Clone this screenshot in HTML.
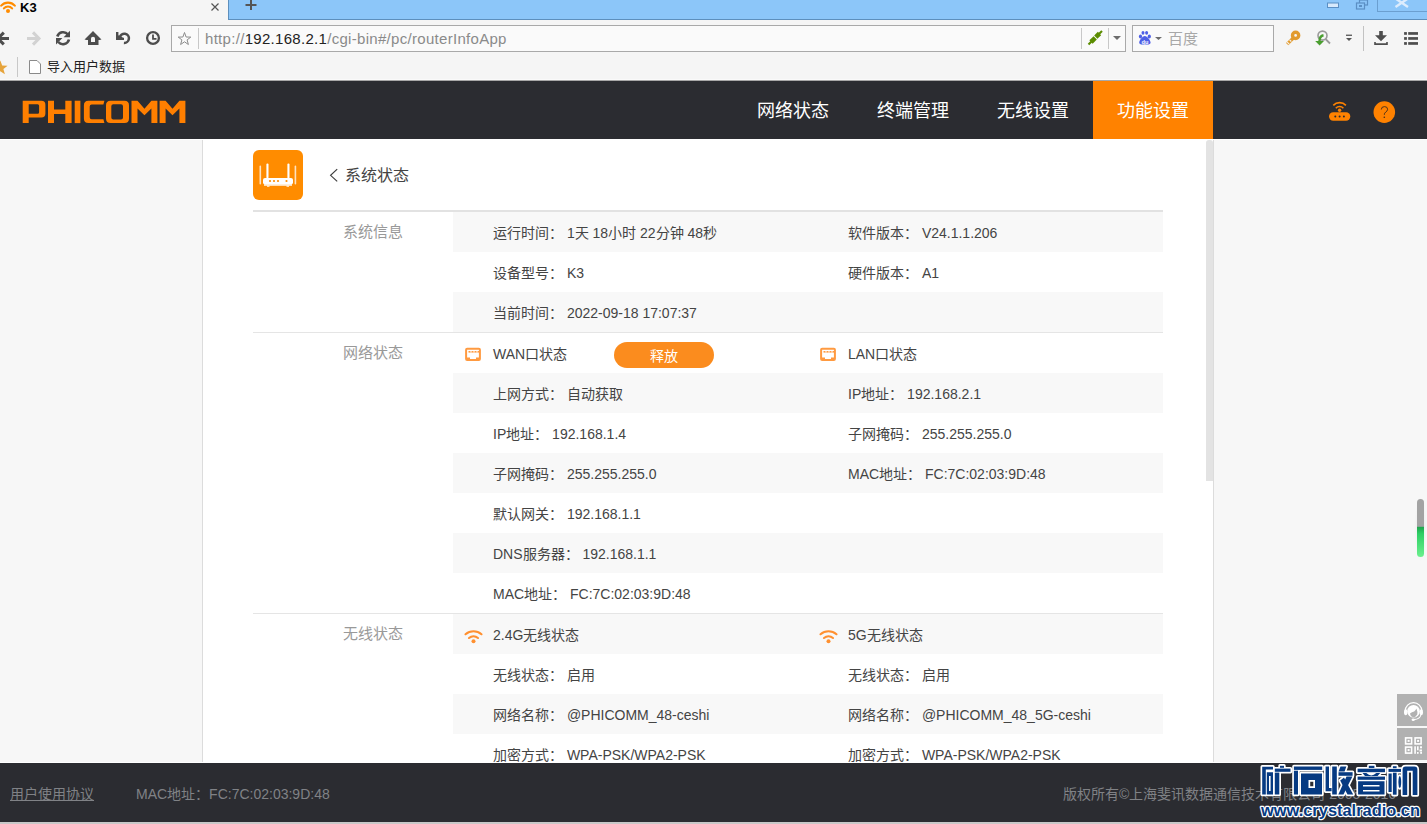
<!DOCTYPE html>
<html lang="zh-CN">
<head>
<meta charset="utf-8">
<style>
*{box-sizing:border-box;margin:0;padding:0}
html,body{width:1427px;height:824px;overflow:hidden;background:#f7f7f7;font-family:"Liberation Sans",sans-serif;color:#333}
.a{position:absolute}
#chrome{position:absolute;left:0;top:0;width:1427px;height:81px;background:#f5f5f5}
#tabstrip{position:absolute;left:228px;top:0;width:1199px;height:20px;background:#8cc6f9;border-left:1px solid #5d8fbd;border-bottom:1px solid #5d8fbd}
#addr{position:absolute;left:171px;top:25px;width:955px;height:27px;background:#fafafa;border:1px solid #a9a9a9}
#search{position:absolute;left:1132px;top:25px;width:142px;height:27px;background:#fafafa;border:1px solid #a9a9a9}
#hdr{position:absolute;left:0;top:81px;width:1427px;height:58px;background:#2b2c31}
.nav{position:absolute;top:0;height:58px;width:120px;line-height:61px;text-align:center;color:#fff;font-size:18px}
#panel{position:absolute;left:202px;top:140px;width:1012px;height:623px;background:#fff;border-left:1px solid #dcdcdc;border-right:1px solid #dcdcdc}
.row{position:absolute;left:453px;width:710px;height:40px}
.g{background:#f8f8f8}
.t{position:absolute;font-size:14px;line-height:40px;white-space:nowrap;color:#444;margin-top:1px}
.lbl{position:absolute;font-size:15px;color:#999;white-space:nowrap}
.div{position:absolute;left:253px;width:910px;height:1px;background:#e5e5e5}
#footer{position:absolute;left:0;top:763px;width:1427px;height:59px;background:#2b2c31}
</style>
</head>
<body>
<div id="chrome">
  <div id="tabstrip"></div>
  <div class="a" style="left:20px;top:0;font-size:13px;font-weight:bold;line-height:16px;color:#000">K3</div>
  <div id="addr"></div>
  <!--CHROMESVG-->
  <div class="a" style="left:205px;top:30px;font-size:15px;letter-spacing:0.3px;line-height:18px;color:#8a8a8a">http://<span style="color:#222">192.168.2.1</span>/cgi-bin#/pc/routerInfoApp</div>
  <div id="search"></div>
  <div class="a" style="left:1168px;top:30px;font-size:15px;line-height:18px;color:#a8a8a8">百度</div>
  <div class="a" style="left:47px;top:58px;font-size:13px;line-height:18px;color:#222">导入用户数据</div>

  <svg class="a" style="left:0;top:0" width="1427" height="81" viewBox="0 0 1427 81">
    <!-- tab favicon wifi -->
    <g fill="none" stroke="#ff8c00" stroke-width="2.1" stroke-linecap="round">
      <path d="M1.2,5.6 A9.2,9.2 0 0 1 14.8,5.6"/>
      <path d="M3.9,8.4 A5.3,5.3 0 0 1 12.1,8.4"/>
    </g>
    <circle cx="8" cy="11.1" r="2" fill="#ff8c00"/>
    <!-- tab close -->
    <path d="M211.5,3.5 L218.5,10.5 M218.5,3.5 L211.5,10.5" stroke="#555" stroke-width="1.2"/>
    <!-- window controls -->
    <rect x="1327.5" y="3" width="11" height="4.5" fill="#d6e9fc" stroke="#5b8fc4" stroke-width="1"/>
    <rect x="1359.5" y="0" width="8" height="5" fill="none" stroke="#5b8fc4" stroke-width="1.2"/>
    <rect x="1356.5" y="3" width="8" height="6" fill="#8cc6f9" stroke="#5b8fc4" stroke-width="1.2"/>
    <rect x="1359" y="5" width="3" height="2" fill="#5b8fc4"/>
    <rect x="1377.5" y="-1" width="50" height="12.5" fill="none" stroke="#6b9fd0" stroke-width="1"/>
    <path d="M1395.5,-1.5 L1408,7 M1408,-1.5 L1395.5,7" stroke="#dcecfd" stroke-width="2.4" fill="none"/>
    <!-- new tab plus -->
    <path d="M245.5,5 H256.5 M251,0 V10" stroke="#555" stroke-width="2"/>
    <!-- back -->
    <g fill="none" stroke="#4d4d4d" stroke-width="3">
      <path d="M9,38.5 H0"/>
      <path d="M3.8,32.6 L-2,38.5 L3.8,44.4"/>
    </g>
    <!-- forward -->
    <g fill="none" stroke="#d2d2d2" stroke-width="3">
      <path d="M27,38.5 H38"/>
      <path d="M33,32.4 L39,38.5 L33,44.6"/>
    </g>
    <!-- refresh -->
    <g fill="none" stroke="#4d4d4d" stroke-width="2.6">
      <path d="M57.3,36.5 A6.2,6.2 0 0 1 68,34.5"/>
      <path d="M69,39.5 A6.2,6.2 0 0 1 58.3,42"/>
    </g>
    <path d="M70,30.8 V37.2 H63.6 Z" fill="#4d4d4d"/>
    <path d="M56,44.5 V38 H62.4 Z" fill="#4d4d4d"/>
    <!-- home -->
    <path d="M93,31 L101.5,39.5 L99.5,40 L98.5,40 V45 H88 V40 H86.5 L84.5,39.5 Z" fill="#4d4d4d"/>
    <path d="M91,42 V38.3 Q91,37 93,36.8 Q95,37 95,38.3 V42 Z" fill="#f5f5f5"/>
    <!-- undo -->
    <path d="M116,32 H118.4 V35.2 L123.2,37.7 H124 V40.1 H116 Z" fill="#4d4d4d"/>
    <path d="M119.8,37.4 A4.6,4.6 0 1 1 123.9,42.9" fill="none" stroke="#4d4d4d" stroke-width="2.5"/>
    <!-- history clock -->
    <circle cx="153" cy="38" r="5.9" fill="none" stroke="#4d4d4d" stroke-width="2.3"/>
    <path d="M153,34.5 V38.8 H156.5" fill="none" stroke="#4d4d4d" stroke-width="1.8"/>
    <!-- addr star -->
    <path d="M184.5,32.5 L186.1,37 L190.8,37.1 L187.1,39.9 L188.4,44.5 L184.5,41.8 L180.6,44.5 L181.9,39.9 L178.2,37.1 L182.9,37 Z" fill="none" stroke="#8c8c8c" stroke-width="1"/>
    <rect x="198" y="28" width="1" height="21" fill="#c8c8c8"/>
    <rect x="1081" y="28" width="1" height="21" fill="#c8c8c8"/>
    <rect x="1108" y="28" width="1" height="21" fill="#c8c8c8"/>
    <!-- plug -->
    <g stroke="#5b8c00" stroke-linecap="butt" fill="none">
      <path d="M1088.5,44.5 L1092.5,40.5" stroke-width="2.2"/>
      <path d="M1091,42 L1095.2,37.8" stroke-width="4.6"/>
      <path d="M1095.8,37.2 L1099.5,33.5" stroke-width="4.6"/>
      <path d="M1098.5,34.5 L1102,31" stroke-width="2.2"/>
    </g>
    <path d="M1113,36 H1121 L1117,40 Z" fill="#6d6d6d"/>
    <!-- baidu paw -->
    <g fill="#4e5fe6">
      <ellipse cx="1140.5" cy="36.5" rx="1.6" ry="2"/>
      <ellipse cx="1143" cy="32.8" rx="1.5" ry="1.9"/>
      <ellipse cx="1146.6" cy="32.8" rx="1.5" ry="1.9"/>
      <ellipse cx="1149.3" cy="36.5" rx="1.6" ry="2"/>
      <path d="M1144.8,36 C1142.5,36 1139.2,40.5 1139.2,42.5 C1139.2,44.7 1142,44.8 1144.8,44.3 C1147.6,44.8 1150.6,44.7 1150.6,42.5 C1150.6,40.5 1147.2,36 1144.8,36 Z"/>
    </g>
    <text x="1144.9" y="43.6" font-family="Liberation Sans" font-size="5.6" font-weight="bold" fill="#fff" text-anchor="middle">du</text>
    <path d="M1155,37 H1162 L1158.5,40 Z" fill="#6d6d6d"/>
    <!-- key -->
    <circle cx="1295.6" cy="35.4" r="3.1" fill="none" stroke="#e29b2e" stroke-width="3.4"/>
    <path d="M1293.3,38 L1287.2,44.1" stroke="#e29b2e" stroke-width="3.2"/>
    <path d="M1287.2,42.2 L1289.2,44.2 M1289.6,39.8 L1291.3,41.5" stroke="#f5f5f5" stroke-width="1.1"/>
    <!-- magnifier -->
    <circle cx="1322.5" cy="35.6" r="4.5" fill="none" stroke="#9a9a9a" stroke-width="1.6"/>
    <path d="M1325.5,39 L1330,43.5" stroke="#9a9a9a" stroke-width="1.8"/>
    <path d="M1323.5,35.2 Q1319.5,36 1319.5,41" fill="none" stroke="#4a9e30" stroke-width="2.4"/>
    <path d="M1315.2,41 H1324 L1319.6,45.6 Z" fill="#4a9e30"/>
    <!-- overflow -->
    <rect x="1346" y="34.6" width="6" height="1.3" fill="#555"/>
    <path d="M1346,38 H1352 L1349,41 Z" fill="#555"/>
    <rect x="1363" y="26" width="1" height="25" fill="#c2c2c2"/>
    <!-- download -->
    <rect x="1379.2" y="31" width="3.6" height="5" fill="#4d4d4d"/>
    <path d="M1375,35.2 H1387 L1381,41.3 Z" fill="#4d4d4d"/>
    <path d="M1374.2,42 H1375.8 V43.3 H1386.2 V42 H1387.8 V45 H1374.2 Z" fill="#4d4d4d"/>
    <!-- list -->
    <g fill="#4d4d4d">
      <rect x="1404.1" y="32.1" width="2.8" height="2.7"/>
      <rect x="1408.2" y="32.1" width="9.8" height="2.7"/>
      <rect x="1404.1" y="37.1" width="2.8" height="2.7"/>
      <rect x="1408.2" y="37.1" width="9.8" height="2.7"/>
      <rect x="1404.1" y="42.1" width="2.8" height="2.7"/>
      <rect x="1408.2" y="42.1" width="9.8" height="2.7"/>
    </g>
    <!-- bookmarks star -->
    <path d="M0.3,60.6 L2.2,65.6 L7.6,65.8 L3.4,69.1 L4.9,74.2 L0.3,71.2 L-4.3,74.2 L-2.8,69.1 L-7,65.8 L-1.6,65.6 Z" fill="#e6a43c"/>
    <rect x="17" y="57" width="1" height="20" fill="#c8c8c8"/>
    <!-- doc icon -->
    <path d="M29.5,60.5 H37 L40.5,64 V73.5 H29.5 Z" fill="#fff" stroke="#8a8a8a" stroke-width="1"/>
    <rect x="0" y="79" width="1427" height="1" fill="#fafafa"/>
    <rect x="0" y="80" width="1427" height="1" fill="#a8a8a8"/>
  </svg>
</div>
<div id="hdr">
  <div class="nav" style="left:733px">网络状态</div>
  <div class="nav" style="left:853px">终端管理</div>
  <div class="nav" style="left:973px">无线设置</div>
  <div class="nav" style="left:1093px;background:#ff8200">功能设置</div>
  <svg class="a" style="left:0;top:0" width="1427" height="58" viewBox="0 81 1427 58">
    <g fill="#ff7f00">
      <path d="M22.7,123.1 V100.7 H41.4 Q45.4,100.7 45.4,104.7 V113.4 Q45.4,117.4 41.4,117.4 H28.7 V123.1 Z M28.7,104.2 V113.7 H37.6 Q39.1,113.7 39.1,112.2 V105.7 Q39.1,104.2 37.6,104.2 Z" fill-rule="evenodd"/>
      <path d="M48,100.7 H54 V109.6 H65.3 V100.7 H71.6 V123.1 H65.3 V114 H54 V123.1 H48 Z"/>
      <rect x="74.7" y="100.7" width="5.7" height="22.4"/>
      <path d="M104.4,100.7 L103.4,104.5 H91.7 Q89.7,104.5 89.7,106.5 V117.3 Q89.7,119.3 91.7,119.3 H103.4 L104.4,123.1 H88.4 Q83.9,123.1 83.9,118.6 V105.2 Q83.9,100.7 88.4,100.7 Z"/>
      <path d="M110.5,100.7 H124.5 Q129,100.7 129,105.2 V118.6 Q129,123.1 124.5,123.1 H110.5 Q106,123.1 106,118.6 V105.2 Q106,100.7 110.5,100.7 Z M113.3,104.2 Q111.3,104.2 111.3,106.2 V117.6 Q111.3,119.6 113.3,119.6 H121 Q123,119.6 123,117.6 V106.2 Q123,104.2 121,104.2 Z" fill-rule="evenodd"/>
      <path d="M131.5,123.1 V100.7 H137.5 L144.45,108.8 L151.4,100.7 H157.4 V123.1 H151.4 V108.6 L144.45,115.2 L137.5,108.6 V123.1 Z"/>
      <path d="M159.6,123.1 V100.7 H165.6 L172.5,108.8 L179.4,100.7 H185.4 V123.1 H179.4 V108.6 L172.5,115.2 L165.6,108.6 V123.1 Z"/>
    </g>
    <!-- router icon -->
    <g fill="#ff8200">
      <rect x="1329" y="112.3" width="21.3" height="8.4" rx="4.2"/>
      <circle cx="1339.6" cy="110.3" r="1.7"/>
    </g>
    <g fill="#2b2c31">
      <circle cx="1335.3" cy="116.5" r="1"/>
      <circle cx="1339.6" cy="116.5" r="1"/>
      <circle cx="1343.9" cy="116.5" r="1"/>
    </g>
    <g fill="none" stroke="#ff8200" stroke-width="1.6">
      <path d="M1335.8,108.2 A5.2,5.2 0 0 1 1343.4,108.2"/>
      <path d="M1333.3,105.4 A8.6,8.6 0 0 1 1345.9,105.4"/>
    </g>
    <!-- help circle -->
    <circle cx="1384.3" cy="112.1" r="10.8" fill="#ff8200"/>
    <path d="M1381.3,109.5 Q1381.3,106.6 1384.5,106.6 Q1387.6,106.6 1387.6,109.3 Q1387.6,110.9 1385.7,112.1 Q1384.3,113 1384.3,114.8" fill="none" stroke="#3a2a20" stroke-width="0.9"/>
    <circle cx="1384.3" cy="117.3" r="0.8" fill="#3a2a20"/>
  </svg>
</div>
<div class="a" style="left:0;top:139px;width:1427px;height:1px;background:#fff"></div>
<div id="panel"></div>
<div class="a" style="left:1206px;top:140px;width:7px;height:341px;background:#e3e3e3;border-radius:3px 3px 0 0"></div>

<div class="a" style="left:253px;top:150px;width:50px;height:50px;background:#ff8c00;border-radius:6px"></div>
<div class="a" style="left:345px;top:165px;font-size:16px;line-height:22px;color:#444">系统状态</div>



<div class="div" style="top:210px;height:2px;background:#e2e2e2"></div>
<div class="lbl" style="left:343px;top:220px">系统信息</div>
<div class="row g" style="top:212px"></div>
<div class="row" style="top:252px"></div>
<div class="row g" style="top:292px"></div>
<div class="t" style="left:493px;top:212px">运行时间： 1天 18小时 22分钟 48秒</div>
<div class="t" style="left:848px;top:212px">软件版本： V24.1.1.206</div>
<div class="t" style="left:493px;top:252px">设备型号： K3</div>
<div class="t" style="left:848px;top:252px">硬件版本： A1</div>
<div class="t" style="left:493px;top:292px">当前时间： 2022-09-18 17:07:37</div>

<div class="div" style="top:332px"></div>
<div class="lbl" style="left:343px;top:341px">网络状态</div>
<div class="row g" style="top:373px"></div>
<div class="row g" style="top:453px"></div>
<div class="row g" style="top:533px"></div>
<div class="t" style="left:493px;top:333px">WAN口状态</div>
<div class="t" style="left:848px;top:333px">LAN口状态</div>
<div class="a" style="left:614px;top:342px;width:100px;height:26px;border-radius:13px;background:#fb8c1e;color:#fff;font-size:14px;line-height:29px;text-align:center">释放</div>
<div class="t" style="left:493px;top:373px">上网方式： 自动获取</div>
<div class="t" style="left:848px;top:373px">IP地址： 192.168.2.1</div>
<div class="t" style="left:493px;top:413px">IP地址： 192.168.1.4</div>
<div class="t" style="left:848px;top:413px">子网掩码： 255.255.255.0</div>
<div class="t" style="left:493px;top:453px">子网掩码： 255.255.255.0</div>
<div class="t" style="left:848px;top:453px">MAC地址： FC:7C:02:03:9D:48</div>
<div class="t" style="left:493px;top:493px">默认网关： 192.168.1.1</div>
<div class="t" style="left:493px;top:533px">DNS服务器： 192.168.1.1</div>
<div class="t" style="left:493px;top:573px">MAC地址： FC:7C:02:03:9D:48</div>

<div class="div" style="top:613px"></div>
<div class="lbl" style="left:343px;top:622px">无线状态</div>
<div class="row g" style="top:614px"></div>
<div class="row g" style="top:694px"></div>
<div class="t" style="left:493px;top:614px">2.4G无线状态</div>
<div class="t" style="left:848px;top:614px">5G无线状态</div>
<div class="t" style="left:493px;top:654px">无线状态： 启用</div>
<div class="t" style="left:848px;top:654px">无线状态： 启用</div>
<div class="t" style="left:493px;top:694px">网络名称： @PHICOMM_48-ceshi</div>
<div class="t" style="left:848px;top:694px">网络名称： @PHICOMM_48_5G-ceshi</div>
<div class="t" style="left:493px;top:734px">加密方式： WPA-PSK/WPA2-PSK</div>
<div class="t" style="left:848px;top:734px">加密方式： WPA-PSK/WPA2-PSK</div>

<svg class="a" style="left:0;top:140px" width="1427" height="623" viewBox="0 140 1427 623">
  <!-- router box icon -->
  <g fill="#fff">
    <rect x="266.4" y="163.6" width="2.1" height="15" rx="1"/>
    <rect x="287.4" y="163.6" width="2.1" height="15" rx="1"/>
    <rect x="259.5" y="165.6" width="1.6" height="19" rx="0.8" opacity="0.75"/>
    <rect x="294.6" y="165.6" width="1.6" height="19" rx="0.8" opacity="0.75"/>
    <rect x="263" y="178" width="30" height="6.5" rx="2"/>
    <rect x="264" y="184" width="28" height="2" opacity="0.7"/>
    <rect x="267" y="185.5" width="2.5" height="1.5" opacity="0.7"/>
    <rect x="286.5" y="185.5" width="2.5" height="1.5" opacity="0.7"/>
  </g>
  <g fill="#ff8c00">
    <circle cx="270" cy="181" r="1.1"/>
    <circle cx="274" cy="181" r="1.1"/>
    <circle cx="278" cy="181" r="1.1"/>
    <circle cx="286.5" cy="181" r="1.1"/>
  </g>
  <!-- back chevron -->
  <path d="M337.2,169.2 L330.6,175.3 L337.2,181.4" fill="none" stroke="#3c3c3c" stroke-width="1.15"/>
  <!-- WAN / LAN icons -->
  <g fill="none" stroke="#ff9a40" stroke-width="2">
    <rect x="466.1" y="348.8" width="13.8" height="11.2" rx="1"/>
    <rect x="821.1" y="348.8" width="13.8" height="11.2" rx="1"/>
  </g>
  <g fill="#ff9a40">
    <rect x="468.5" y="351" width="11" height="1.6"/>
    <rect x="823.5" y="351" width="11" height="1.6"/>
    <rect x="467" y="357.5" width="3" height="2"/>
    <rect x="476" y="357.5" width="3" height="2"/>
    <rect x="822" y="357.5" width="3" height="2"/>
    <rect x="831" y="357.5" width="3" height="2"/>
  </g>
  <g fill="#fff">
    <rect x="470.5" y="351" width="1" height="1.6"/><rect x="473.5" y="351" width="1" height="1.6"/><rect x="476.5" y="351" width="1" height="1.6"/>
    <rect x="825.5" y="351" width="1" height="1.6"/><rect x="828.5" y="351" width="1" height="1.6"/><rect x="831.5" y="351" width="1" height="1.6"/>
  </g>
  <!-- wifi icons -->
  <g fill="none" stroke="#ff9030" stroke-width="2.1" stroke-linecap="round">
    <path d="M465.5,634.2 A12.3,12.3 0 0 1 481.5,634.2"/>
    <path d="M469,638 A7.2,7.2 0 0 1 478,638"/>
    <path d="M820.5,634.2 A12.3,12.3 0 0 1 836.5,634.2"/>
    <path d="M824,638 A7.2,7.2 0 0 1 833,638"/>
  </g>
  <circle cx="473.5" cy="641.2" r="2" fill="#ff9030"/>
  <circle cx="828.5" cy="641.2" r="2" fill="#ff9030"/>
</svg>

<!-- floating side buttons -->
<div class="a" style="left:1397px;top:694px;width:30px;height:32px;background:#b1b1b1"></div>
<div class="a" style="left:1397px;top:728px;width:30px;height:32px;background:#b1b1b1"></div>
<svg class="a" style="left:1397px;top:694px" width="30" height="66" viewBox="1397 694 30 66">
  <path d="M1405.2,711 A8.3,8.3 0 0 1 1421.8,711" fill="none" stroke="#fff" stroke-width="1.3"/>
  <circle cx="1413.5" cy="711.3" r="6.3" fill="#fff"/>
  <path d="M1410,713.6 Q1411.8,711.8 1414.2,711.4 Q1415.8,710 1416.4,708.6 Q1417.8,711.8 1417.3,714.6 Q1415.6,717.4 1413.3,717.3 Q1410.6,717 1410,713.6 Z" fill="#b1b1b1"/>
  <ellipse cx="1405.7" cy="712.3" rx="1.7" ry="3" fill="#fff"/>
  <ellipse cx="1421.3" cy="712.3" rx="1.7" ry="3" fill="#fff"/>
  <path d="M1421,714.5 Q1420,719.3 1414,719.6" fill="none" stroke="#fff" stroke-width="1.1"/>
  <ellipse cx="1413.2" cy="719.8" rx="1.6" ry="1.2" fill="#fff"/>
  <g fill="none" stroke="#fff" stroke-width="1.6">
    <rect x="1405.6" y="737.9" width="6" height="6"/>
    <rect x="1415.1" y="737.9" width="6" height="6"/>
    <rect x="1405.6" y="747.1" width="6" height="6"/>
  </g>
  <g fill="#fff">
    <rect x="1407.6" y="739.9" width="2" height="2"/>
    <rect x="1417.1" y="739.9" width="2" height="2"/>
    <rect x="1407.6" y="749.1" width="2" height="2"/>
    <rect x="1414.3" y="746.3" width="1.6" height="7.5"/>
    <rect x="1417" y="746.3" width="1.6" height="4"/>
    <rect x="1420" y="746.3" width="2" height="2"/>
    <rect x="1419.5" y="749.5" width="2.5" height="2"/>
    <rect x="1417" y="752" width="1.6" height="1.8"/>
    <rect x="1420.2" y="752" width="1.8" height="1.8"/>
  </g>
</svg>
<!-- scroll indicator -->
<div class="a" style="left:1414px;top:496px;width:13px;height:66px;background:radial-gradient(ellipse at center,rgba(0,0,0,0.06),rgba(0,0,0,0) 70%)"></div>
<div class="a" style="left:1417px;top:499px;width:7px;height:58px;border-radius:3.5px;background:linear-gradient(#a3a3a3 0,#a3a3a3 47%,#1fa84f 49%,#2ecf65 60%,#6cf08e 100%)"></div>
<div class="a" style="left:0;top:762px;width:1427px;height:1px;background:#fff"></div>
<div id="footer">
  <div class="a" style="left:10px;top:22px;font-size:14px;line-height:18px;color:#808286;text-decoration:underline">用户使用协议</div>
  <div class="a" style="left:136px;top:22px;font-size:14px;line-height:18px;color:#808286">MAC地址：FC:7C:02:03:9D:48</div>
  <div class="a" style="left:1063px;top:22px;font-size:14px;line-height:18px;color:#808286">版权所有©上海斐讯数据通信技术有限公司 2005-2016</div>
</div>
<div class="a" style="left:0;top:822px;width:1427px;height:2px;background:#c8c8c8"></div>

<svg class="a" style="left:1240px;top:755px" width="187" height="69" viewBox="1240 755 187 69">
  <g fill="#fff" stroke="#fff" stroke-width="3.4" stroke-linejoin="round">
  <path d="M1262.2,766.8 H1273 V769.4 H1265.8 V794.5 H1262.2 Z"/>
  <path d="M1266.8,772.2 H1273 V794.5 H1266.8 Z M1269,776 V791 H1270.6 V776 Z" fill-rule="evenodd"/>
  <rect x="1280" y="765.8" width="4" height="2"/>
  <rect x="1274.8" y="768.6" width="15.7" height="3.2"/>
  <rect x="1274.8" y="772.6" width="4.5" height="21.9"/>
  <rect x="1293.9" y="766.5" width="28.3" height="3.4"/>
  <rect x="1293.9" y="770.7" width="4.1" height="23.8"/>
  <path d="M1301,773.5 H1322 V794.5 H1301 Z M1308.5,780 V788 H1315 V780 Z" fill-rule="evenodd"/>
  <path d="M1325.6,766.5 H1329 V788 H1331.6 V791.2 H1325.6 Z"/>
  <rect x="1332.2" y="766.5" width="4.6" height="28"/>
  <path d="M1340.5,766.5 H1346.3 L1344.6,771.4 H1338.5 Z"/>
  <rect x="1338.5" y="772.2" width="14.1" height="3.6"/>
  <path d="M1346.5,776.6 H1352.4 L1343.5,794.5 H1338.3 Z"/>
  <path d="M1340.2,780.5 L1344,777.5 L1353.2,794.5 H1347.5 Z"/>
  <rect x="1368.8" y="765.8" width="5.6" height="2.2"/>
  <rect x="1357.6" y="768.7" width="27.4" height="3.5"/>
  <path d="M1362.5,773 H1380.2 L1377.6,776 H1365 Z M1366.3,773 Q1371.3,777.8 1376.3,773 Z" fill-rule="evenodd"/>
  <rect x="1357.6" y="776.6" width="27.4" height="3.2"/>
  <path d="M1358.1,781.2 H1384.5 V794.5 H1358.1 Z M1363,785 V786.6 H1379.5 V785 Z M1363,790 V791.6 H1379.5 V790 Z" fill-rule="evenodd"/>
  <rect x="1388.5" y="768.9" width="12.5" height="3"/>
  <rect x="1392.9" y="766.2" width="3.7" height="2"/>
  <rect x="1392.9" y="772.7" width="3.7" height="22"/>
  <rect x="1388.5" y="773.5" width="3.2" height="18.5"/>
  <ellipse cx="1399.8" cy="782" rx="1.4" ry="6"/>
  <path d="M1402.6,795 V769.4 Q1402.6,766.4 1405.6,766.4 H1414.4 Q1417.4,766.4 1417.4,769.4 V795 H1412.7 V770.8 H1407.2 V795 Z"/>
</g>
  <g fill="#063a82">
  <path d="M1262.2,766.8 H1273 V769.4 H1265.8 V794.5 H1262.2 Z"/>
  <path d="M1266.8,772.2 H1273 V794.5 H1266.8 Z M1269,776 V791 H1270.6 V776 Z" fill-rule="evenodd"/>
  <rect x="1280" y="765.8" width="4" height="2"/>
  <rect x="1274.8" y="768.6" width="15.7" height="3.2"/>
  <rect x="1274.8" y="772.6" width="4.5" height="21.9"/>
  <rect x="1293.9" y="766.5" width="28.3" height="3.4"/>
  <rect x="1293.9" y="770.7" width="4.1" height="23.8"/>
  <path d="M1301,773.5 H1322 V794.5 H1301 Z M1308.5,780 V788 H1315 V780 Z" fill-rule="evenodd"/>
  <path d="M1325.6,766.5 H1329 V788 H1331.6 V791.2 H1325.6 Z"/>
  <rect x="1332.2" y="766.5" width="4.6" height="28"/>
  <path d="M1340.5,766.5 H1346.3 L1344.6,771.4 H1338.5 Z"/>
  <rect x="1338.5" y="772.2" width="14.1" height="3.6"/>
  <path d="M1346.5,776.6 H1352.4 L1343.5,794.5 H1338.3 Z"/>
  <path d="M1340.2,780.5 L1344,777.5 L1353.2,794.5 H1347.5 Z"/>
  <rect x="1368.8" y="765.8" width="5.6" height="2.2"/>
  <rect x="1357.6" y="768.7" width="27.4" height="3.5"/>
  <path d="M1362.5,773 H1380.2 L1377.6,776 H1365 Z M1366.3,773 Q1371.3,777.8 1376.3,773 Z" fill-rule="evenodd"/>
  <rect x="1357.6" y="776.6" width="27.4" height="3.2"/>
  <path d="M1358.1,781.2 H1384.5 V794.5 H1358.1 Z M1363,785 V786.6 H1379.5 V785 Z M1363,790 V791.6 H1379.5 V790 Z" fill-rule="evenodd"/>
  <rect x="1388.5" y="768.9" width="12.5" height="3"/>
  <rect x="1392.9" y="766.2" width="3.7" height="2"/>
  <rect x="1392.9" y="772.7" width="3.7" height="22"/>
  <rect x="1388.5" y="773.5" width="3.2" height="18.5"/>
  <ellipse cx="1399.8" cy="782" rx="1.4" ry="6"/>
  <path d="M1402.6,795 V769.4 Q1402.6,766.4 1405.6,766.4 H1414.4 Q1417.4,766.4 1417.4,769.4 V795 H1412.7 V770.8 H1407.2 V795 Z"/>
</g>
  <text x="1261" y="816.3" font-family="Liberation Sans" font-size="16.2" font-weight="bold" fill="#063a82" stroke="#fff" stroke-width="2.4" stroke-linejoin="round" paint-order="stroke" textLength="159" lengthAdjust="spacingAndGlyphs">www.crystalradio.cn</text>
</svg>
</body>
</html>
